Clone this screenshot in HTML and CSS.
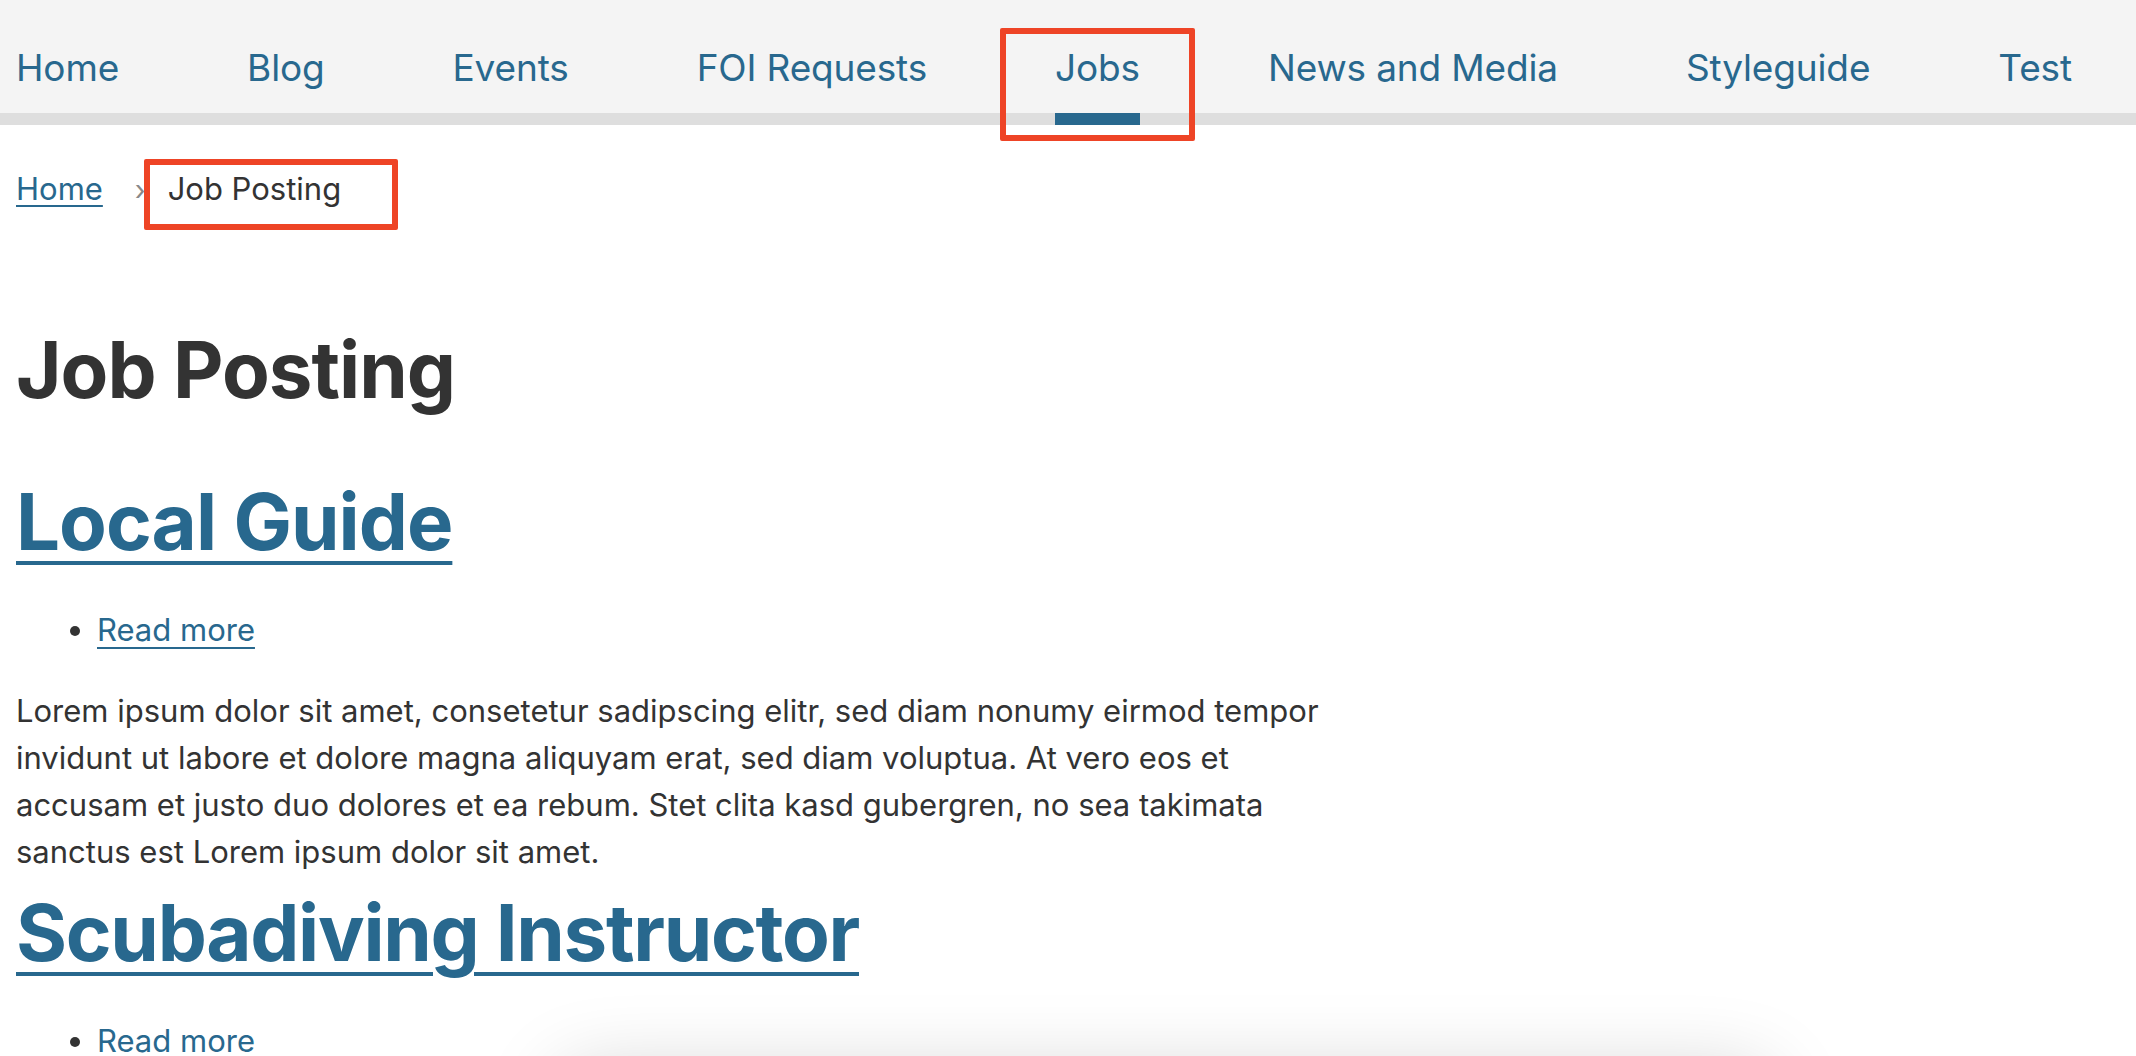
FILE: index.html
```html
<!DOCTYPE html>
<html lang="en">
<head>
<meta charset="utf-8">
<title>Job Posting</title>
<link rel="stylesheet" href="styles.css">
</head>
<body>
<header class="site-header">
  <nav class="main-nav">
    <ul class="nav-list">
      <li><a class="nav-link" href="#">Home</a></li>
      <li><a class="nav-link" href="#">Blog</a></li>
      <li><a class="nav-link" href="#">Events</a></li>
      <li><a class="nav-link" href="#">FOI Requests</a></li>
      <li class="nav-item-marked"><a class="nav-link is-active" href="#">Jobs</a><span class="mark mark-nav"></span></li>
      <li><a class="nav-link" href="#">News and Media</a></li>
      <li><a class="nav-link" href="#">Styleguide</a></li>
      <li><a class="nav-link" href="#">Test</a></li>
    </ul>
  </nav>
</header>
<main class="content">
  <ol class="breadcrumb">
    <li><a class="crumb-link" href="#">Home</a></li>
    <li class="crumb-sep">›</li>
    <li class="crumb-current">Job Posting<span class="mark mark-crumb"></span></li>
  </ol>
  <h1 class="page-title">Job Posting</h1>
  <article class="job">
    <h2 class="job-title"><a href="#">Local Guide</a></h2>
    <ul class="job-links"><li><a href="#">Read more</a></li></ul>
    <p class="job-body">Lorem ipsum dolor sit amet, consetetur sadipscing elitr, sed diam nonumy eirmod tempor invidunt ut labore et dolore magna aliquyam erat, sed diam voluptua. At vero eos et accusam et justo duo dolores et ea rebum. Stet clita kasd gubergren, no sea takimata sanctus est Lorem ipsum dolor sit amet.</p>
  </article>
  <article class="job">
    <h2 class="job-title"><a href="#">Scubadiving Instructor</a></h2>
    <ul class="job-links"><li><a href="#">Read more</a></li></ul>
  </article>
</main>
<div class="floating-panel"></div>
</body>
</html>
```

FILE: styles.css
```css
html, body {
  margin: 0;
  padding: 0;
  background: #ffffff;
  overflow: hidden;
}
body {
  font-family: Inter, "Noto Sans", sans-serif;
  color: #333333;
  width: 2136px;
  height: 1056px;
  position: relative;
}
a { color: #28688e; }

.site-header {
  background: #f4f4f4;
  border-bottom: 12px solid #dedede;
}
.nav-list {
  display: flex;
  gap: 128px;
  list-style: none;
  margin: 0;
  padding: 0 16px;
}
.nav-list li { position: relative; }
.nav-link {
  display: block;
  position: relative;
  height: 113px;
  line-height: 136px;
  font-size: 37px;
  text-decoration: none;
  color: #28688e;
  letter-spacing: -0.15px;
}
.nav-link.is-active::after {
  content: "";
  position: absolute;
  left: 0;
  right: 0;
  bottom: -12px;
  height: 12px;
  background: #28688e;
}

.mark {
  position: absolute;
  border: 6px solid #ee4426;
  border-radius: 2px;
  pointer-events: none;
}
.mark-nav {
  left: -55px;
  right: -55px;
  top: 28px;
  height: 101px;
}
.mark-crumb {
  left: -24px;
  top: -10px;
  width: 242px;
  height: 59px;
}

.content {
  padding: 0 16px;
}
.breadcrumb {
  display: flex;
  align-items: baseline;
  list-style: none;
  margin: 0;
  padding: 44px 0 0;
  font-size: 31px;
  line-height: 40px;
}
.crumb-link {
  color: #28688e;
  text-decoration-thickness: 2px;
  text-underline-offset: 5px;
}
.crumb-sep {
  color: #888888;
  margin: 0 22px 0 32px;
  font-size: 28px;
}
.crumb-current {
  position: relative;
  color: #333333;
}

.page-title {
  font-size: 78px;
  font-weight: 700;
  line-height: 96px;
  margin: 112px 0 0;
  color: #333333;
  letter-spacing: -1px;
}
.job-title {
  font-size: 78px;
  font-weight: 700;
  line-height: 96px;
  margin: 56px 0 0;
  letter-spacing: -1px;
}
.job-title a {
  text-decoration-thickness: 4px;
  text-underline-offset: 11px;
}
.job + .job .job-title { margin-top: 10px; letter-spacing: -1.3px; }
.job-links {
  margin: 40px 0 0;
  padding-left: 81px;
  font-size: 31px;
  line-height: 40px;
}
.job-links a {
  text-decoration-thickness: 2px;
  text-underline-offset: 6px;
}
.job-body {
  margin: 37px 0 0;
  max-width: 1330px;
  font-size: 31px;
  line-height: 47px;
  color: #333333;
}

.floating-panel {
  position: absolute;
  left: 560px;
  top: 1072px;
  width: 1210px;
  height: 200px;
  border-radius: 24px;
  background: #ffffff;
  box-shadow: 0 0 80px rgba(0, 0, 0, 0.18);
}
```
